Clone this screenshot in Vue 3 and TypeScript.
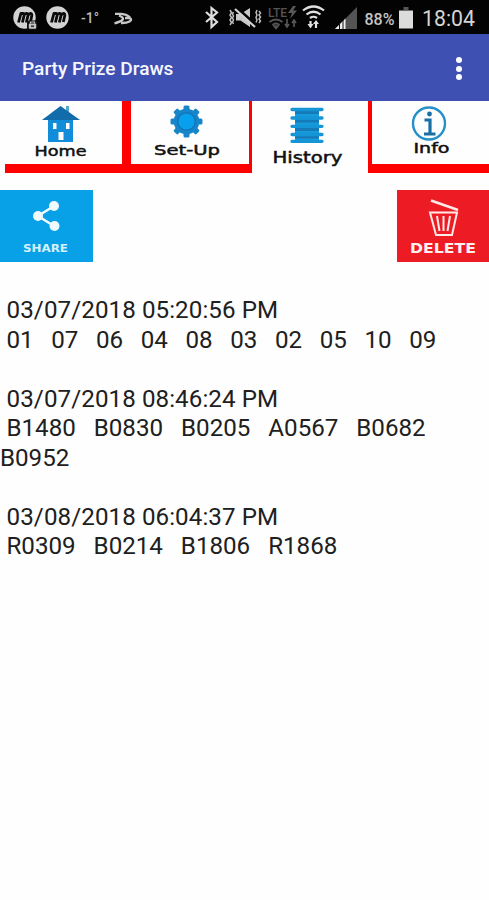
<script setup lang="ts">
import { ref } from 'vue'

interface Draw {
  date: string
  numbers: string[]
}

const title = 'Party Prize Draws'
const draws = ref<Draw[]>([
  { date: '03/07/2018 05:20:56 PM', numbers: ['01', '07', '06', '04', '08', '03', '02', '05', '10', '09'] },
  { date: '03/07/2018 08:46:24 PM', numbers: ['B1480', 'B0830', 'B0205', 'A0567', 'B0682', 'B0952'] },
  { date: '03/08/2018 06:04:37 PM', numbers: ['R0309', 'B0214', 'B1806', 'R1868'] },
])

const gap = '\u00a0\u00a0 '
const teeth = [0, 45, 90, 135, 180, 225, 270, 315]

function isPlain(draw: Draw): boolean {
  return draw.numbers.every((n) => /^\d+$/.test(n))
}
</script>

<template>
  <div class="screen">
    <header class="status">
      <svg width="489" height="34" viewBox="0 0 489 34">
        <g fill="#d2d2d2">
          <circle cx="24.5" cy="17.5" r="11.2" />
          <circle cx="57.5" cy="17.5" r="11.2" />
        </g>
        <g fill="none" stroke="#0b0b0b" stroke-width="2.8" stroke-linejoin="round">
          <path d="M18.5 22.5l2.4-9h2.2q1.5.2 1 2l-1.700 7M23.500 15.500q1-2 3-2t1.500 2l-1.700 7M28 15.500q1-2 2.500-2t1.300 2l-1.300 6.500" />
          <path d="M51.500 22.500l2.400-9h2.200q1.500.2 1 2l-1.700 7M56.500 15.500q1-2 3-2t1.500 2l-1.700 7M61 15.500q1-2 2.500-2t1.300 2l-1.500 6.500" />
        </g>
        <rect x="27" y="20.500" width="10.500" height="9.500" rx="2" fill="#111" />
        <rect x="28.800" y="23.500" width="7.400" height="5.200" rx="1" fill="#c4c4c4" />
        <path d="M30.500 23.500v-1.500h4v1.500" fill="none" stroke="#c4c4c4" stroke-width="1.200" />
        <path d="M31 26.200h3" stroke="#222" stroke-width="1.400" />
        <text x="81" y="23" class="temp" textLength="18" lengthAdjust="spacingAndGlyphs">-1°</text>
        <g fill="none" stroke="#c8c8c8" stroke-width="2.300" stroke-linejoin="round">
          <path d="M115 13.800h6.500q5.500.5 8.500 3.800" />
          <path d="M119 15.500q5.500 2.200 3.500 4.500-2 1.700-8 3.300" />
          <path d="M125 18l5 .2q2.500 1.800-.5 3.300-3 1.700-8.500 1.500" />
        </g>
        <path d="M206 12l11 10-5.500 5V8l5.500 4.500-11 9.500" fill="none" stroke="#dedede" stroke-width="2.200" />
        <path d="M236 14h4.500l9.500-6v19l-9.500-6.500H236z" fill="#c9c9c9" />
        <path d="M236 7l20 18" stroke="#050505" stroke-width="3" />
        <path d="M235 9l20 18" stroke="#d2d2d2" stroke-width="2.200" />
        <path d="M230 10l1.500 2.500-1.500 2.500 1.500 2.500-1.500 2.500 1.500 2.500-1.500 2.500M233.500 12l-1 2 1 2-1 2 1 2-1 2 1 2M257 10l-1 2.500 1 2.500-1 2.500 1 2.500-1 2.500M259 11l1.500 2-1.500 2 1.500 2-1.500 2 1.500 2-1.500 2" fill="none" stroke="#bcbcbc" stroke-width="1.500" />
        <g class="lte">
          <text x="268" y="16.500" textLength="19" lengthAdjust="spacingAndGlyphs">LTE</text>
          <path d="M293 6l-5 7h4l-2 6 7-8.500h-4l3-4.500z" fill="#5a5a5a" />
          <path d="M269.500 22q6.500-5 13 0M272.500 25q3.500-3 7 0" fill="none" stroke="#555" stroke-width="2" />
          <path d="M274 26h4l-2 2.500zM287 19v8m-2-3l2 3 2-3M294 27v-7m-2 3l2-3 2 3" fill="none" stroke="#555" stroke-width="1.700" />
        </g>
        <g fill="none" stroke="#e0e0e0" stroke-width="2.200">
          <path d="M303 10.500q10.500-8 21 0M306.500 14.500q7-5.500 14 0M310 18q3.500-2.500 7 0" />
          <path d="M310.500 26v-5M316 22v6" />
        </g>
        <path d="M307.500 24h6l-3 4.500zM313 24h6l-3-4z" fill="#e0e0e0" />
        <path d="M335 29l22-22v22z" fill="#545454" />
        <path d="M335 29l10.500-10.500V29z" fill="#ededed" />
        <path d="M339.500 23v6M343 20v9" stroke="#111" stroke-width="1" />
        <text x="364.500" y="24.500" class="percent" textLength="30" lengthAdjust="spacingAndGlyphs">88%</text>
        <rect x="403.500" y="7" width="5" height="3" fill="#555" />
        <rect x="399" y="10.500" width="14" height="18" fill="#dcdcdc" />
        <text x="422" y="26" class="clock" textLength="53" lengthAdjust="spacingAndGlyphs">18:04</text>
      </svg>
    </header>

    <div class="appbar">
      <h1>{{ title }}</h1>
      <button class="menu" aria-label="More options">
        <i></i><i></i><i></i>
      </button>
    </div>

    <nav class="tabs">
      <a class="tab home">
        <svg width="122" height="62" viewBox="0 101 122 62">
          <path d="M66 106h3v7h-3z" fill="#56a5cf" />
          <path d="M48 118h25v24H48z" fill="#118dd9" />
          <path d="M60.500 106L80 120H42z" fill="#126ca9" />
          <path d="M53 123h3.500v6H53zM66 123h3.500v6H66zM58.500 132h5v8h-5z" fill="#fff" />
          <text x="34.500" y="155.500" textLength="52" lengthAdjust="spacingAndGlyphs">Home</text>
        </svg>
      </a>
      <a class="tab setup">
        <svg width="118" height="62" viewBox="131 101 118 62">
          <circle cx="186.500" cy="121.500" r="12.800" fill="#1685ca" />
          <rect v-for="a in teeth" :key="a" x="183.500" y="105.500" width="6" height="7" rx="1.500" fill="#1685ca" :transform="`rotate(${a} 186.500 121.500)`" />
          <circle cx="186.500" cy="121.500" r="8.800" fill="#08a0ee" stroke="#1475b5" stroke-width="1.500" />
          <text x="154" y="155" textLength="66" lengthAdjust="spacingAndGlyphs">Set-Up</text>
        </svg>
      </a>
      <a class="tab history">
        <svg width="116" height="72" viewBox="252 101 116 72">
          <path d="M295 109h24v33h-24z" fill="#169bdd" />
          <path d="M295 111h24v3h-24zM295 119.500h24v3h-24zM295 128h24v3h-24zM295 136h24v2.500h-24z" fill="#1679b8" />
          <path d="M292 109.500h30M292 118h30M292 126.300h30M292 134.500h30M292 141.300h30" stroke="#1595d5" stroke-width="3.300" stroke-linecap="round" />
          <text x="272.500" y="162.500" textLength="70" lengthAdjust="spacingAndGlyphs">History</text>
        </svg>
      </a>
      <a class="tab info">
        <svg width="117" height="62" viewBox="372 101 117 62">
          <circle cx="429" cy="123.500" r="16" fill="#fcfeff" stroke="#258fc7" stroke-width="2.400" />
          <circle cx="429.500" cy="114" r="2.400" fill="#196fa5" />
          <path d="M424.500 120h5.500v13.500M424 134h11.500" fill="none" stroke="#196fa5" stroke-width="3.200" />
          <text x="413.500" y="153.300" textLength="36" lengthAdjust="spacingAndGlyphs">Info</text>
        </svg>
      </a>
    </nav>

    <div class="actions">
      <button class="action share">
        <svg width="93" height="72" viewBox="0 190 93 72">
          <path d="M54 206L38 216l16 10" fill="none" stroke="#effaff" stroke-width="2.500" />
          <g fill="#effaff">
            <circle cx="54" cy="206" r="5" />
            <circle cx="38" cy="216" r="5" />
            <circle cx="54.500" cy="226" r="5" />
          </g>
          <text x="23" y="251.500" class="share-label" textLength="45" lengthAdjust="spacingAndGlyphs">SHARE</text>
        </svg>
      </button>
      <button class="action delete">
        <svg width="92" height="72" viewBox="397 190 92 72">
          <g fill="none" stroke="#ffe9e9" stroke-width="2">
            <path d="M431 200.500l27 9.500" stroke-width="2.500" />
            <path d="M430 212.500h27l-5 22.500h-16z" />
            <path d="M437 216l2.500 15M443.500 216v15M450 216l-2.500 15" />
          </g>
          <text x="410" y="252.500" class="delete-label" textLength="66" lengthAdjust="spacingAndGlyphs">DELETE</text>
        </svg>
      </button>
    </div>

    <main class="log">
      <section v-for="draw in draws" :key="draw.date">
        <p class="date">&nbsp;{{ draw.date }}</p>
        <p :class="{ plain: isPlain(draw) }">&nbsp;{{ draw.numbers.join(gap) }}</p>
      </section>
    </main>
  </div>
</template>

<style>
body {
  margin: 0;
  background: #fefefe;
}
</style>

<style scoped>
.screen {
  width: 489px;
  height: 900px;
  overflow: hidden;
  background: #fefefe;
  font-family: Roboto, sans-serif;
}
svg {
  display: block;
}
.status {
  height: 34px;
  background: #030303;
}
.temp {
  font-size: 14px;
  font-weight: 500;
  fill: #bdbdbd;
}
.lte text {
  font-size: 12px;
  font-weight: 500;
  fill: #555;
}
.percent {
  font-size: 16px;
  font-weight: 500;
  fill: #c4c4c4;
}
.clock {
  font-size: 22px;
  fill: #d5d5d5;
}
.appbar {
  box-sizing: border-box;
  height: 67px;
  padding: 2px 27px 0 22px;
  display: flex;
  align-items: center;
  justify-content: space-between;
  background: #3e51b3;
}
h1 {
  margin: 0;
  font-size: 19.100px;
  font-weight: 500;
  color: #f7f8ff;
}
.menu {
  padding: 0;
  border: 0;
  background: none;
  display: flex;
  flex-direction: column;
  gap: 2.500px;
}
.menu i {
  width: 6px;
  height: 6px;
  border-radius: 50%;
  background: #fff;
}
.tabs {
  display: flex;
  height: 72px;
}
.tab {
  box-sizing: border-box;
  height: 72px;
}
.tab text {
  font-family: "DejaVu Sans", sans-serif;
  font-size: 14.500px;
  fill: #111;
  stroke: #111;
  stroke-width: 0.5px;
}
.home,
.setup,
.info {
  background: linear-gradient(#ff0000, #ff0000) 0 100% / 100% 9.500px no-repeat;
}
.home {
  width: 131px;
  border-right: 9px solid #f00;
  background-position: 5px 100%;
}
.setup {
  width: 121px;
  border-right: 3px solid #f00;
}
.history {
  width: 116px;
}
.history text {
  font-size: 15.500px;
}
.info {
  width: 121px;
  border-left: 4px solid #f00;
}
.actions {
  margin-top: 17px;
  display: flex;
  justify-content: space-between;
}
.action {
  padding: 0;
  border: 0;
  height: 72px;
}
.share {
  background: #08a1e8;
}
.delete {
  background: #ed1c24;
}
.action text {
  font-family: "DejaVu Sans", sans-serif;
  font-weight: bold;
}
.share-label {
  font-size: 10px;
  fill: #d5f1ff;
}
.delete-label {
  font-size: 13.500px;
  fill: #fff0f0;
}
.log {
  margin-top: 34px;
  display: flex;
  flex-direction: column;
  gap: 29.500px;
}
.log p {
  margin: 0;
  white-space: pre-wrap;
  text-indent: 0.5px;
  font-size: 24.150px;
  line-height: 29.500px;
  color: #202020;
}
.log .date {
  letter-spacing: 0.08px;
}
.log .plain {
  letter-spacing: -0.07px;
}
</style>
